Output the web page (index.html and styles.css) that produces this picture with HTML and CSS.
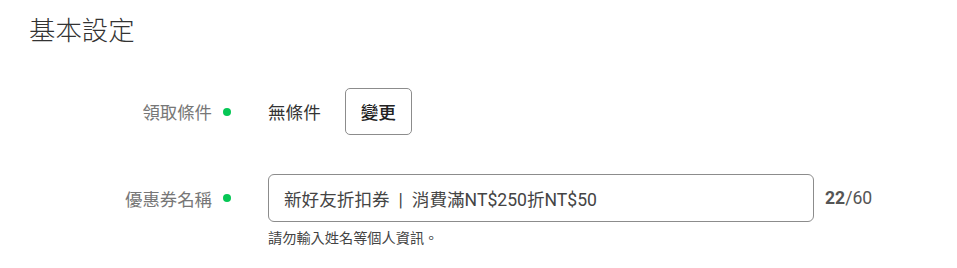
FILE: index.html
```html
<!DOCTYPE html>
<html lang="zh-Hant">
<head>
<meta charset="UTF-8">
<meta name="viewport" content="width=device-width, initial-scale=1.0">
<title>基本設定</title>
<link rel="stylesheet" href="styles.css">
</head>
<body>

<div class="page">
  <h1 class="section-title">基本設定</h1>

  <div class="form">
    <div class="field">
      <div class="field-label">
        <span>領取條件</span>
        <i class="required-dot"></i>
      </div>
      <div class="field-body">
        <div class="field-line">
          <span class="value-text">無條件</span>
          <button type="button" class="btn-change">變更</button>
        </div>
      </div>
    </div>

    <div class="field">
      <div class="field-label">
        <span>優惠券名稱</span>
        <i class="required-dot"></i>
      </div>
      <div class="field-body">
        <div class="field-line">
          <input type="text" class="text-input" value="新好友折扣券&#8194;|&#8194;消費滿NT$250折NT$50">
          <span class="counter"><b>22</b>/60</span>
        </div>
        <p class="hint">請勿輸入姓名等個人資訊。</p>
      </div>
    </div>
  </div>
</div>

</body>
</html>
```

FILE: styles.css
```css
body {
  margin: 0;
  padding: 0;
  background-color: #fff;
  font-family: Roboto, "Noto Sans CJK TC", sans-serif;
  color: #333;
}
.page {
  padding: 14px 29px;
}
.section-title {
  margin: 0;
  font-size: 26.4px;
  font-weight: 300;
  line-height: 34px;
  color: #333;
}
.form {
  margin-top: 40px;
  display: flex;
  flex-direction: column;
  gap: 39px;
}
.field {
  display: flex;
  align-items: flex-start;
}
.field-label {
  box-sizing: border-box;
  width: 239px;
  height: 47px;
  padding-right: 37px;
  display: flex;
  justify-content: flex-end;
  align-items: center;
  gap: 11px;
  font-size: 17.4px;
  color: #777;
}
.field + .field .field-label {
  height: 48px;
}
.required-dot {
  width: 8px;
  height: 8px;
  border-radius: 50%;
  background-color: #06c755;
}
.field-line {
  display: flex;
  align-items: center;
}
.value-text {
  font-size: 17.6px;
  color: #333;
}
.btn-change {
  margin-left: 24px;
  box-sizing: border-box;
  width: 67px;
  height: 47px;
  padding: 0;
  border: 1px solid #8c8c8c;
  border-radius: 5px;
  background-color: #fff;
  font-family: inherit;
  font-size: 17.6px;
  font-weight: 500;
  color: #222;
  cursor: pointer;
}
.text-input {
  box-sizing: border-box;
  width: 546px;
  height: 48px;
  padding: 0 15px;
  border: 1px solid #8c8c8c;
  border-radius: 6px;
  font-family: inherit;
  font-size: 17.6px;
  color: #444;
  outline: none;
}
.counter {
  margin-left: 11px;
  font-size: 17.6px;
  color: #555;
}
.counter b {
  font-weight: 700;
}
.hint {
  margin: 7px 0 0;
  font-size: 14.2px;
  line-height: 18px;
  color: #444;
}
```
